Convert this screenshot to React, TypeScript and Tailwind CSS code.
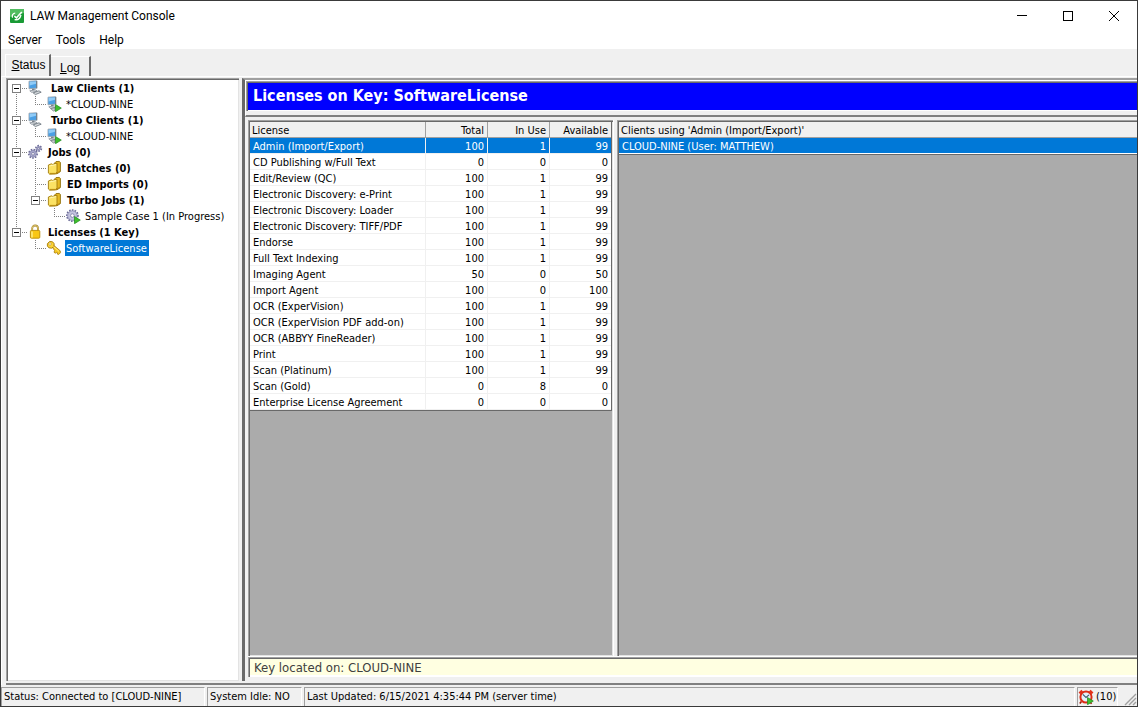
import { useState } from 'react';
import type { ReactNode } from 'react';

type IconName =
	| 'computer'
	| 'computer-run'
	| 'gears'
	| 'folder'
	| 'gear-run'
	| 'lock'
	| 'key';

type Guide = 'blank' | 'line' | 'tee' | 'elbow' | 'first' | 'box' | 'last';

type TreeRow = {
	id: string;
	label: string;
	icon: IconName;
	guides: Guide[];
	bold?: boolean;
	indent?: boolean;
};

type License = {
	name: string;
	total: number;
	inUse: number;
	available: number;
};

const treeRows: TreeRow[] = [
	{ id: 'law', label: 'Law Clients (1)', icon: 'computer', guides: ['first'], bold: true, indent: true },
	{ id: 'law-1', label: '*CLOUD-NINE', icon: 'computer-run', guides: ['line', 'elbow'] },
	{ id: 'turbo', label: 'Turbo Clients (1)', icon: 'computer', guides: ['box'], bold: true, indent: true },
	{ id: 'turbo-1', label: '*CLOUD-NINE', icon: 'computer-run', guides: ['line', 'elbow'] },
	{ id: 'jobs', label: 'Jobs (0)', icon: 'gears', guides: ['box'], bold: true },
	{ id: 'batches', label: 'Batches (0)', icon: 'folder', guides: ['line', 'tee'], bold: true },
	{ id: 'ed', label: 'ED Imports (0)', icon: 'folder', guides: ['line', 'tee'], bold: true },
	{ id: 'turbo-jobs', label: 'Turbo Jobs (1)', icon: 'folder', guides: ['line', 'last'], bold: true },
	{ id: 'sample', label: 'Sample Case 1 (In Progress)', icon: 'gear-run', guides: ['line', 'blank', 'elbow'] },
	{ id: 'licenses', label: 'Licenses (1 Key)', icon: 'lock', guides: ['last'], bold: true },
	{ id: 'software', label: 'SoftwareLicense', icon: 'key', guides: ['blank', 'elbow'] },
];

const licenses: License[] = [
	{ name: 'Admin (Import/Export)', total: 100, inUse: 1, available: 99 },
	{ name: 'CD Publishing w/Full Text', total: 0, inUse: 0, available: 0 },
	{ name: 'Edit/Review (QC)', total: 100, inUse: 1, available: 99 },
	{ name: 'Electronic Discovery: e-Print', total: 100, inUse: 1, available: 99 },
	{ name: 'Electronic Discovery: Loader', total: 100, inUse: 1, available: 99 },
	{ name: 'Electronic Discovery: TIFF/PDF', total: 100, inUse: 1, available: 99 },
	{ name: 'Endorse', total: 100, inUse: 1, available: 99 },
	{ name: 'Full Text Indexing', total: 100, inUse: 1, available: 99 },
	{ name: 'Imaging Agent', total: 50, inUse: 0, available: 50 },
	{ name: 'Import Agent', total: 100, inUse: 0, available: 100 },
	{ name: 'OCR (ExperVision)', total: 100, inUse: 1, available: 99 },
	{ name: 'OCR (ExperVision PDF add-on)', total: 100, inUse: 1, available: 99 },
	{ name: 'OCR (ABBYY FineReader)', total: 100, inUse: 1, available: 99 },
	{ name: 'Print', total: 100, inUse: 1, available: 99 },
	{ name: 'Scan (Platinum)', total: 100, inUse: 1, available: 99 },
	{ name: 'Scan (Gold)', total: 0, inUse: 8, available: 0 },
	{ name: 'Enterprise License Agreement', total: 0, inUse: 0, available: 0 },
];

const PlayMark = () => (
	<path d="M9.5 8.5v7.2l5.8-3.6z" fill="#3fbf2c" stroke="#1d8a1d" strokeWidth=".7" />
);

const Gear = ({ cx, cy, r, fill }: { cx: number; cy: number; r: number; fill: string }) => (
	<g>
		<circle cx={cx} cy={cy} r={r} fill="none" stroke="#6d6d98" strokeWidth="2" strokeDasharray="1.5 1.2" />
		<circle cx={cx} cy={cy} r={r - 0.6} fill={fill} stroke="#8888b0" strokeWidth=".8" />
		<circle cx={cx} cy={cy} r={r / 3} fill="#fff" stroke="#6d6d98" strokeWidth=".7" />
	</g>
);

const TreeIcon = ({ name }: { name: IconName }) => (
	<svg width="16" height="16" viewBox="0 0 16 16" className="shrink-0" aria-hidden="true">
		{(name === 'computer' || name === 'computer-run') && (
			<>
				<path d="M2 1.2 9.6.8v7.4L2 8.8z" fill="#4a9fe4" stroke="#9aa4ae" strokeWidth=".9" />
				<path d="M2.6 1.8 9 1.4v2.4L2.6 5.4z" fill="#8fcbf7" />
				<path d="M9.8.9v7.5" stroke="#56616c" strokeWidth=".8" />
				<path d="M5 8.8h2.6v1.6H5z" fill="#7b858e" />
				<path d="M2.8 10.8 8.4 9.8l1.8 1.2-5.4 1.4z" fill="#dce0e3" stroke="#77808a" strokeWidth=".7" />
				{name === 'computer' ? (
					<path d="M6.2 12.9 12 10.8l2.2 1.4-5.8 2.4z" fill="#d5d9dc" stroke="#656e77" strokeWidth=".8" />
				) : (
					<path d="M4.6 12.6 9 11.6v3l-1.6.4z" fill="#c8ccd0" stroke="#656e77" strokeWidth=".7" />
				)}
			</>
		)}
		{name === 'gears' && (
			<>
				<Gear cx={6} cy={9.8} r={4} fill="#a9a9cc" />
				<Gear cx={11.6} cy={4.4} r={2.6} fill="#a9a9cc" />
			</>
		)}
		{name === 'gear-run' && <Gear cx={7.4} cy={7.6} r={5.4} fill="#c3c3de" />}
		{name === 'folder' && (
			<>
				<path d="M8.6 3 10 1.6l3.2-.2 1.2 1v9.2L10.6 14z" fill="#e5b822" stroke="#8f6d08" strokeWidth=".9" />
				<path d="M2.4 5 5.4 3.8l1 .6 4.6-1.2v8.6L9.8 14 3.6 14.2 2.4 13z" fill="#fbe264" stroke="#a37c0c" strokeWidth=".9" />
				<path d="M3.4 6 10 4.6" stroke="#fff6b0" strokeWidth="1" />
				<path d="M3.6 13.4h6L14 11.4" fill="none" stroke="#b88a10" strokeWidth="1" />
			</>
		)}
		{name === 'lock' && (
			<>
				<path d="M5.2 7V4.4a2.9 2.9 0 0 1 5.8 0V7" fill="none" stroke="#a5852a" strokeWidth="1.8" />
				<path d="M5.2 7V4.4a2.9 2.9 0 0 1 5.8 0V7" fill="none" stroke="#f1dc8a" strokeWidth=".7" />
				<rect x="3.4" y="6.4" width="9.4" height="7.8" rx="1" fill="#f9c614" stroke="#b98a04" strokeWidth=".9" />
				<path d="M5 7.4v6" stroke="#ffee8c" strokeWidth="1.4" />
			</>
		)}
		{name === 'key' && (
			<>
				<path
					d="m6 6.6 1.6-1.4 6.6 5.6.2 2-1.6 1.6-1.6-.4.4-1.2-1-.4-1.4.8-1.2-1 .6-1.6z"
					fill="#f7c924"
					stroke="#a67a08"
					strokeWidth=".8"
				/>
				<path d="M1.4 3.6 3.6 1.4l3 .4 1.6 2-.4 2.8-2.2 1.6-2.8-.4L1.4 6z" fill="#fbd436" stroke="#a67a08" strokeWidth=".9" />
				<circle cx="4" cy="4" r="1.2" fill="#fff" stroke="#a67a08" strokeWidth=".5" />
				<path d="m7.4 6.6 5.4 4.6" stroke="#fff0a0" strokeWidth=".8" />
			</>
		)}
		{(name === 'computer-run' || name === 'gear-run') && <PlayMark />}
	</svg>
);

const GuideCell = ({ kind }: { kind: Guide }) => {
	const box = kind === 'first' || kind === 'box' || kind === 'last';
	const up = kind !== 'blank' && kind !== 'first';
	const down = kind === 'line' || kind === 'tee' || kind === 'first' || kind === 'box';
	const right = kind !== 'blank' && kind !== 'line';

	return (
		<svg width="19" height="16" viewBox="0 0 19 16" shapeRendering="crispEdges" className="shrink-0" aria-hidden="true">
			<g stroke="#808080" strokeDasharray="1 1">
				{up && <path d="M8.5 0v8" />}
				{down && <path d="M8.5 8v8" />}
				{right && <path d="M8 8.5h11" />}
			</g>
			{box && (
				<>
					<rect x="4.5" y="4.5" width="8" height="8" fill="#fff" stroke="#808080" />
					<path d="M6 8.5h5" stroke="#000" />
				</>
			)}
		</svg>
	);
};

// double line edge drawn around the inset panels
const Sunken = ({ className, children }: { className: string; children?: ReactNode }) => (
	<div className={`border-t border-l border-[#a0a0a0] ${className}`}>
		<div className="flex h-full w-full flex-col border-t border-l border-[#696969]">{children}</div>
	</div>
);

const App = () => {
	const [selectedNode, setSelectedNode] = useState('software');
	const [selectedLicense, setSelectedLicense] = useState(0);

	return (
		<div className="flex h-screen flex-col overflow-hidden border border-[#3a3a3a] bg-[#f0f0f0] font-['DejaVu_Sans_Condensed','DejaVu_Sans',sans-serif] text-[11px] leading-4 text-black">
			<header className="flex h-[30px] shrink-0 items-center bg-white pl-2 font-['Roboto',sans-serif]">
				<svg width="16" height="16" viewBox="0 0 16 16" aria-hidden="true">
					<rect x="1" y="1" width="14" height="14" rx="1" fill="#199a35" />
					<path d="M1 1h14v4L1 9z" fill="#52bd61" />
					<path d="M3.6 9.6a3 3 0 0 1 2.6-4.4M5.6 11.6c3 .6 5.4-1 6.4-4.6" fill="none" stroke="#fff" strokeWidth="1.3" />
					<path d="m5.4 8.2 2 1.6L12.8 4" fill="none" stroke="#fff" strokeWidth="1.6" />
				</svg>
				<h1 className="ml-1 flex-1 pl-px text-xs">LAW Management Console</h1>
				<button aria-label="Minimize" className="flex h-full w-[46px] items-center justify-center">
					<svg width="10" height="10" viewBox="0 0 10 10" shapeRendering="crispEdges">
						<path d="M0 4.5h10" stroke="#000" />
					</svg>
				</button>
				<button aria-label="Maximize" className="flex h-full w-[46px] items-center justify-center">
					<svg width="10" height="10" viewBox="0 0 10 10" shapeRendering="crispEdges">
						<rect x=".5" y=".5" width="9" height="9" fill="none" stroke="#000" />
					</svg>
				</button>
				<button aria-label="Close" className="flex h-full w-[46px] items-center justify-center">
					<svg width="10" height="10" viewBox="0 0 10 10">
						<path d="m0 0 10 10M10 0 0 10" stroke="#000" />
					</svg>
				</button>
			</header>

			<nav className="flex h-[18px] shrink-0 items-center gap-[14px] bg-white pl-[7px] font-['Roboto',sans-serif] text-xs leading-[18px]">
				<button>Server</button>
				<button>Tools</button>
				<button>Help</button>
			</nav>

			<div role="tablist" className="flex h-[27px] shrink-0 items-end pl-1 font-['Liberation_Sans',sans-serif] text-xs">
				<button
					role="tab"
					aria-selected="true"
					className="h-[22px] w-[46px] border-t border-l border-r-2 border-t-white border-l-white border-r-[#696969] pb-0.5 pl-0.5"
				>
					<u>S</u>tatus
				</button>
				<button
					role="tab"
					aria-selected="false"
					className="h-5 w-10 border-t border-r-2 border-t-white border-r-[#696969] pt-0.5"
				>
					<u>L</u>og
				</button>
			</div>

			<div className="flex min-h-0 flex-1 flex-col border-t border-l border-white pt-px pl-1">
				<div className="flex min-h-0 flex-1 border-b-2 border-b-[#808080] pb-0.5">
					<Sunken className="w-[233px] shrink-0">
						<ul className="h-full border-r border-b border-[#e3e3e3] bg-white">
							{treeRows.map((row) => (
								<li key={row.id} className="flex h-4 items-center">
									{row.guides.map((kind, index) => (
										<GuideCell kind={kind} key={index} />
									))}
									<TreeIcon name={row.icon} />
									<button
										onClick={() => setSelectedNode(row.id)}
										className={`ml-[3px] h-4 pt-0.5 pr-0.5 leading-[14px] whitespace-nowrap ${
											row.indent ? 'pl-[5px]' : row.bold ? 'pl-0.5' : 'pl-px'
										} ${row.bold ? 'font-bold' : ''} ${
											selectedNode === row.id ? 'bg-[#0078d7] text-white' : ''
										}`}
									>
										{row.label}
									</button>
								</li>
							))}
						</ul>
					</Sunken>

					<div className="ml-[3px] flex min-w-0 flex-1 flex-col border-t-2 border-l-3 border-t-[#a0a0a0] border-l-[#696969]">
						<div className="flex shrink-0 flex-col border-t border-l border-white border-b-2 border-b-[#808080] pb-1">
							<Sunken className="h-[30px]">
								<h2 className="flex-1 border-b border-white bg-[#0000ff] pl-[5px] text-base leading-[25px] font-bold text-white">
									Licenses on Key: SoftwareLicense
								</h2>
							</Sunken>
						</div>

						<main className="flex min-h-0 flex-1 flex-col pt-[3px] pl-[3px]">
							<div className="flex min-h-0 flex-1 border-b border-white">
								<Sunken className="w-[365px] shrink-0">
									<div className="flex-1 border-r border-b border-[#e3e3e3] bg-[#ababab]">
										<table className="w-full table-fixed border-separate border-spacing-0 border-r border-b border-[#696969] bg-white">
											<thead>
												<tr className="bg-[#f0f0f0] leading-[13px]">
													<th className="w-[176px] border-r border-b border-[#a0a0a0] p-0 pt-0.5 pl-0.5 text-left font-normal">
														License
													</th>
													<th className="w-[62px] border-r border-b border-[#a0a0a0] p-0 pt-0.5 pr-[3px] text-right font-normal">
														Total
													</th>
													<th className="w-[62px] border-r border-b border-[#a0a0a0] p-0 pt-0.5 pr-[3px] text-right font-normal">
														In Use
													</th>
													<th className="border-b border-[#a0a0a0] p-0 pt-0.5 pr-[3px] text-right font-normal">
														Available
													</th>
												</tr>
											</thead>
											<tbody>
												{licenses.map((item, index) => (
													<tr
														key={item.name}
														onClick={() => setSelectedLicense(index)}
														className={`leading-[13px] ${
															selectedLicense === index ? 'bg-[#0078d7] text-white' : ''
														}`}
													>
														<td className="border-r border-b border-[#f0f0f0] p-0 pt-0.5 pl-[3px] whitespace-nowrap">
															{item.name}
														</td>
														<td className="border-r border-b border-[#f0f0f0] p-0 pt-0.5 pr-[3px] text-right">
															{item.total}
														</td>
														<td className="border-r border-b border-[#f0f0f0] p-0 pt-0.5 pr-[3px] text-right">
															{item.inUse}
														</td>
														<td className="border-b border-[#f0f0f0] p-0 pt-0.5 pr-[3px] text-right">
															{item.available}
														</td>
													</tr>
												))}
											</tbody>
										</table>
									</div>
								</Sunken>
								<div className="w-1 shrink-0 border-l border-white" />
								<Sunken className="min-w-0 flex-1">
									<div className="flex-1 border-b border-[#e3e3e3] bg-[#ababab]">
										<table className="w-full border-separate border-spacing-0 border-b border-[#696969]">
											<thead>
												<tr className="bg-[#f0f0f0] leading-[13px]">
													<th className="border-b border-[#a0a0a0] p-0 pt-0.5 pl-0.5 text-left font-normal">
														Clients using 'Admin (Import/Export)'
													</th>
												</tr>
											</thead>
											<tbody>
												<tr className="bg-[#0078d7] leading-[13px] text-white">
													<td className="border-b border-white p-0 pt-0.5 pl-[3px]">
														CLOUD-NINE (User: MATTHEW)
													</td>
												</tr>
											</tbody>
										</table>
									</div>
								</Sunken>
							</div>
							<Sunken className="h-5 shrink-0">
								<p className="flex-1 border-b-2 border-white bg-[#ffffe1] pt-px pl-1 text-[13px] leading-[15px] text-[#404040]">
									Key located on: CLOUD-NINE
								</p>
							</Sunken>
							<div className="h-1 shrink-0" />
						</main>
					</div>
				</div>
			</div>

			<footer className="flex h-[21px] shrink-0 gap-0.5 pt-0.5">
				<div className="w-[204px] border-t border-l border-[#a0a0a0] border-r border-r-white pl-0.5 leading-[18px] whitespace-nowrap">
					Status: Connected to [CLOUD-NINE]
				</div>
				<div className="w-[95px] border-t border-l border-[#a0a0a0] border-r border-r-white pl-0.5 leading-[18px] whitespace-nowrap">
					System Idle: NO
				</div>
				<div className="flex-1 border-t border-l border-[#a0a0a0] border-r border-r-white pl-0.5 leading-[18px]">
					Last Updated: 6/15/2021 4:35:44 PM (server time)
				</div>
				<div className="flex w-[41px] items-center gap-0.5 border-t border-l border-[#a0a0a0] border-r border-r-white whitespace-nowrap">
					<svg width="16" height="16" viewBox="0 0 16 16" className="shrink-0" aria-hidden="true">
						<path d="M1.4 4.4 4.2 1.6M11.8 1.6l2.8 2.8" stroke="#e2321c" strokeWidth="2.4" />
						<path d="m3.4 12.6-1.6 2M12 13l1.6 1.8" stroke="#a81808" strokeWidth="1.6" />
						<circle cx="8" cy="8" r="5.6" fill="#e4f1fa" stroke="#dd2c16" strokeWidth="2" />
						<path d="M4.8 5.4 8 8.4l3-2.6" fill="none" stroke="#3c566e" strokeWidth="1.1" />
						<PlayMark />
					</svg>
					(10)
				</div>
				<svg width="17" height="19" viewBox="0 0 17 19" className="shrink-0" aria-hidden="true">
					<path d="m5 18 11-11M9 18l7-7M13 18l3-3" stroke="#a0a0a0" strokeWidth="1.4" />
				</svg>
			</footer>
		</div>
	);
};

export default App;
